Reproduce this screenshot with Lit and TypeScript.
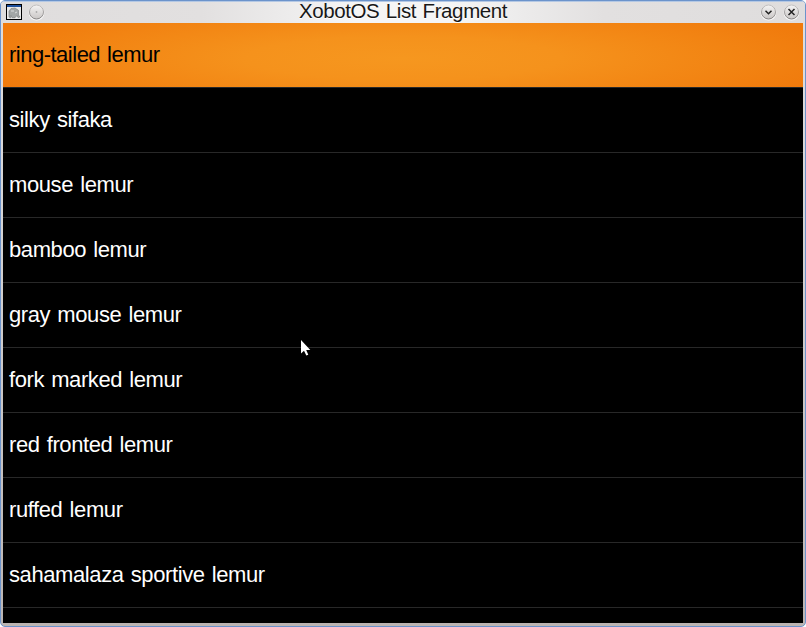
import { LitElement, html, css, svg } from "lit";
import { customElement, property } from "lit/decorators.js";
import { classMap } from "lit/directives/class-map.js";

@customElement("title-button")
class TitleButton extends LitElement {
  @property() kind = "menu";

  static styles = css`
    :host { display: block; width: 17px; height: 17px; }
    svg { display: block; }
  `;

  glyph() {
    if (this.kind === "shade") return svg`<path d="M5.5 6.7 8.5 9.7 11.5 6.7" fill="none" stroke="#222" stroke-width="1.5"/>`;
    if (this.kind === "close") return svg`<path d="M5.5 5 11.5 11M11.5 5 5.5 11" fill="none" stroke="#222" stroke-width="1.5"/>`;
    return svg`<circle cx="8.5" cy="8" r="0.9" fill="#aaa"/>`;
  }

  render() {
    return html`<svg width="17" height="17" viewBox="0 0 17 17">
      <defs>
        <linearGradient id="face" x1="0" y1="0" x2="0" y2="1">
          <stop offset="0" stop-color="#f5f4f4" /><stop offset="1" stop-color="#c9c6c5" />
        </linearGradient>
        <linearGradient id="rim" x1="0" y1="0" x2="0" y2="1">
          <stop offset="0" stop-color="#c2c0c0" /><stop offset="1" stop-color="#838080" />
        </linearGradient>
      </defs>
      <circle cx="8.5" cy="8.7" r="7.8" fill="#f8f8f8" />
      <circle cx="8.5" cy="8" r="7" fill="url(#face)" stroke="url(#rim)" />
      ${this.glyph()}
    </svg>`;
  }
}

@customElement("app-root")
class AppRoot extends LitElement {
  private items = [
    "ring-tailed lemur",
    "silky sifaka",
    "mouse lemur",
    "bamboo lemur",
    "gray mouse lemur",
    "fork marked lemur",
    "red fronted lemur",
    "ruffed lemur",
    "sahamalaza sportive lemur",
  ];

  static styles = css`
    :host { display: block; width: 806px; height: 627px; background: #fff; font-family: "Liberation Sans", Arial, sans-serif; }
    .window {
      box-sizing: border-box; width: 806px; height: 627px; position: relative;
      display: flex; flex-direction: column;
      border: 1px solid #6b93cb; border-radius: 5px; overflow: hidden;
      padding: 0 2px 3px;
      background: linear-gradient(#dfdddd, #d8d6d6 30%, #bcb5b2);
    }
    .bar {
      flex: none; height: 22px; margin: 0 -2px; padding: 0 5px;
      display: grid; grid-template-columns: 60px 1fr 60px; align-items: center;
      background: linear-gradient(90deg, #dfdddd, #e2e0e0 25%, #f5f5f5 44%, #f5f5f5 56%, #e2e0e0 75%, #dfdddd);
      box-shadow: inset 0 1px #b4c8e4;
    }
    .group { display: flex; align-items: center; gap: 6px; }
    .group:first-child { gap: 5px; }
    .right { justify-content: flex-end; }
    .app { display: block; }
    .title { text-align: center; font-size: 20.5px; line-height: 20px; height: 22px; color: #181818; white-space: nowrap; text-shadow: 0 1px #fff; letter-spacing: -0.4px; word-spacing: 1.2px; }
    .list { flex: 1; min-height: 0; background: #000; overflow: hidden; }
    .row {
      box-sizing: border-box; height: 65px; border-bottom: 1px solid #282828;
      display: flex; align-items: center; padding-left: 6px;
      color: #fff; font-size: 22px; letter-spacing: -0.4px; word-spacing: 1.4px; white-space: nowrap;
    }
    .selected {
      color: #000; letter-spacing: -0.5px;
      background: radial-gradient(ellipse 450px 62px at 50% 55%, #f6971f, #f5921c 35%, #f07a0c 100%) padding-box;
    }
    .cursor { position: absolute; left: 299px; top: 338px; }
  `;

  render() {
    return html`
      <div class="window">
        <div class="bar">
          <div class="group">
            <svg class="app" width="17" height="17" viewBox="0 0 17 17">
              <rect x="0.5" y="0.5" width="15" height="15" fill="#e9e9e9" stroke="#000" />
              <rect x="1" y="1" width="14" height="2" fill="#1d4f9c" />
              <path d="M3 13V7L5 4.5 9 4l3.5 2.3V11l1.5 2-2 .5-1-2-2 2.2H6L5 11.5 4.5 14z" fill="#a3a7a7" stroke="#777b7b" stroke-width=".6" />
              <path d="M5 7h3M9 9l2-1" stroke="#dadcdc" />
            </svg>
            <title-button kind="menu"></title-button>
          </div>
          <div class="title">XobotOS List Fragment</div>
          <div class="group right">
            <title-button kind="shade"></title-button>
            <title-button kind="close"></title-button>
          </div>
        </div>
        <div class="list">
          ${this.items.map((t, i) => html`<div class=${classMap({ row: true, selected: i === 0 })}><span>${t}</span></div>`)}
        </div>
        <svg class="cursor" width="12" height="20" viewBox="0 0 12 20">
          <path d="M1 1V14.5L4 11.8 6.3 16.6 8.3 15.7 6.2 11H10.3z" fill="#fff" />
        </svg>
      </div>
    `;
  }
}
